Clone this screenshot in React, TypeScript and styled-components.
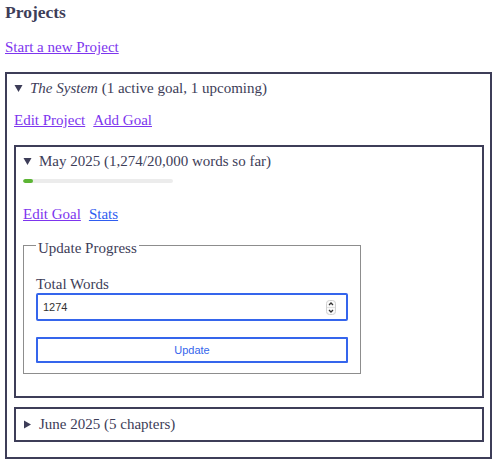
import React from "react";
import styled, { createGlobalStyle } from "styled-components";

const ink = "#3d3d58";
const blue = "#3565ec";

const Global = createGlobalStyle`
  html, body { margin: 0; padding: 0; background: #fff; }
  body { font-family: "Liberation Serif", "Times New Roman", serif; color: ${ink}; font-size: 15px; line-height: 17px; }
  * { box-sizing: border-box; }
`;

const Page = styled.div`
  padding: 2px 5px 0 5px;
`;

const Title = styled.h3`
  margin: 0;
  font-size: 17.5px;
  line-height: 20px;
  font-weight: bold;
`;

const Link = styled.a<{ $visited?: boolean }>`
  color: ${(p) => (p.$visited ? "#7d35ee" : "#2f5df0")};
  text-decoration: underline;
  cursor: pointer;
`;

const TopLink = styled.div`
  margin-top: 17px;
`;

const Box = styled.div<{ $pad: string; $mt?: number }>`
  border: 2px solid ${ink};
  padding: ${(p) => p.$pad};
  margin-top: ${(p) => p.$mt ?? 0}px;
`;

const Summary = styled.div`
  display: flex;
  align-items: center;
  height: 17px;
`;

const Marker = styled.svg`
  width: 9px;
  height: 9px;
  margin-left: 0;
  margin-right: 7px;
  flex: none;
  fill: ${ink};
`;

const Links = styled.div<{ $mt: number }>`
  display: flex;
  gap: 8px;
  margin-top: ${(p) => p.$mt}px;
`;

const Track = styled.div`
  margin-top: 9px;
  width: 150px;
  height: 4px;
  border-radius: 2px;
  background: #ececec;
  overflow: hidden;
`;

const Fill = styled.div`
  height: 100%;
  border-radius: 2px;
  background: #5cb534;
`;

const Fieldset = styled.fieldset`
  margin: 10px 0 0 0;
  width: 338px;
  border: 1px solid #8d8d8d;
  padding: 19px 12px 10px 12px;
`;

const Legend = styled.legend`
  padding: 7px 2px 0 2px;
  line-height: 17px;
`;

const Label = styled.label`
  display: block;
  line-height: 17px;
`;

const InputShell = styled.div`
  display: flex;
  align-items: center;
  height: 28px;
  border: 2px solid ${blue};
  border-radius: 2px;
  padding: 0 10px 0 5px;
`;

const Input = styled.input`
  flex: 1;
  min-width: 0;
  border: none;
  outline: none;
  padding: 0;
  font-family: "Liberation Sans", Arial, sans-serif;
  font-size: 11px;
  color: #333;
  background: transparent;
`;

const Spinner = styled.svg`
  width: 10px;
  height: 15px;
  flex: none;
`;

const Button = styled.button`
  display: block;
  width: 100%;
  height: 26px;
  margin-top: 16px;
  border: 2px solid ${blue};
  border-radius: 1px;
  background: #fff;
  color: ${blue};
  font-family: "Liberation Sans", Arial, sans-serif;
  font-size: 11px;
  padding: 0;
`;

const Down = () => (
  <Marker viewBox="0 0 9 9">
    <polygon points="0.5,1 8.5,1 4.5,8" />
  </Marker>
);

const Right = () => (
  <Marker viewBox="0 0 9 9">
    <polygon points="1,0.5 8,4.5 1,8.5" />
  </Marker>
);

export default function App() {
  const words = 1274;
  const goal = 20000;
  return (
    <Page>
      <Global />
      <Title>Projects</Title>
      <TopLink>
        <Link $visited>Start a new Project</Link>
      </TopLink>
      <Box $pad="6px 6px 15px 7px" $mt={16}>
        <Summary>
          <Down />
          <span>
            <i>The System</i>&nbsp;(1 active goal, 1 upcoming)
          </span>
        </Summary>
        <Links $mt={15}>
          <Link $visited>Edit Project</Link>
          <Link $visited>Add Goal</Link>
        </Links>
        <Box $pad="6px 6px 22px 7px" $mt={16}>
          <Summary>
            <Down />
            <span>May 2025 (1,274/20,000 words so far)</span>
          </Summary>
          <Track>
            <Fill style={{ width: `${Math.max(6, (words / goal) * 100)}%` }} />
          </Track>
          <Links $mt={23}>
            <Link $visited>Edit Goal</Link>
            <Link>Stats</Link>
          </Links>
          <Fieldset>
            <Legend>Update Progress</Legend>
            <Label htmlFor="tw">Total Words</Label>
            <InputShell>
              <Input id="tw" type="text" defaultValue="1274" />
              <Spinner viewBox="0 0 10 15">
                <rect x="0.5" y="0.5" width="9" height="14" rx="3" fill="#fafafa" stroke="#d0d0d0" />
                <line x1="1" y1="7.5" x2="9" y2="7.5" stroke="#e2e2e2" />
                <polyline points="3,5 5,3 7,5" fill="none" stroke="#333" strokeWidth="1.3" />
                <polyline points="3,10 5,12 7,10" fill="none" stroke="#333" strokeWidth="1.3" />
              </Spinner>
            </InputShell>
            <Button type="button">Update</Button>
          </Fieldset>
        </Box>
        <Box $pad="7px 6px 7px 7px" $mt={9}>
          <Summary>
            <Right />
            <span>June 2025 (5 chapters)</span>
          </Summary>
        </Box>
      </Box>
    </Page>
  );
}
